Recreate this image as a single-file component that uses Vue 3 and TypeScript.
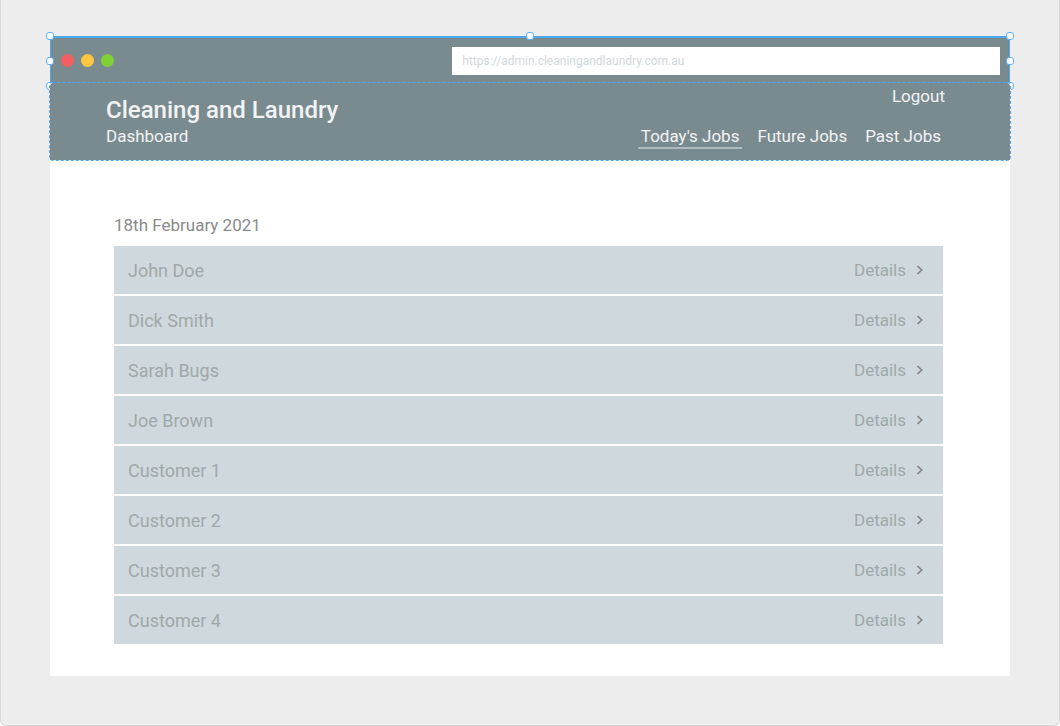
<script setup lang="ts">
import { ref } from 'vue'

interface Job {
  id: number
  customer: string
}

const address = ref('https://admin.cleaningandlaundry.com.au')
const lights: string[] = ['red', 'amber', 'green']
const handles: string[] = ['nw', 'n', 'ne', 'w', 'e', 'sw', 'se']
const tabs: string[] = ["Today's Jobs", 'Future Jobs', 'Past Jobs']
const activeTab = ref(tabs[0])

const jobs: Job[] = [
  'John Doe',
  'Dick Smith',
  'Sarah Bugs',
  'Joe Brown',
  'Customer 1',
  'Customer 2',
  'Customer 3',
  'Customer 4',
].map((customer, index) => ({ id: index + 1, customer }))
</script>

<template>
  <div class="canvas">
    <div class="window">
      <div class="browser-bar">
        <div class="lights">
          <span v-for="light in lights" :key="light" class="light" :class="light"></span>
        </div>
        <input v-model="address" class="address" type="text" aria-label="Address" spellcheck="false" />
        <span v-for="handle in handles" :key="handle" class="handle" :class="handle"></span>
      </div>

      <header class="app-header">
        <svg class="dashes" aria-hidden="true">
          <rect x="0.5" y="0.5" rx="3" />
        </svg>
        <div class="brand">
          <h1>Cleaning and Laundry</h1>
          <p>Dashboard</p>
        </div>
        <div class="menu">
          <a class="logout" href="#logout">Logout</a>
          <nav>
            <a
              v-for="tab in tabs"
              :key="tab"
              href="#jobs"
              :class="{ active: tab === activeTab }"
              @click.prevent="activeTab = tab"
            >{{ tab }}</a>
          </nav>
        </div>
      </header>

      <main>
        <h2>18th February 2021</h2>
        <ul class="jobs">
          <li v-for="job in jobs" :key="job.id">
            <span class="customer">{{ job.customer }}</span>
            <a class="details" href="#details" :aria-label="`Details for ${job.customer}`">
              Details
              <svg width="8" height="10" viewBox="0 0 8 10" aria-hidden="true">
                <path d="M1.5 1 L5.7 5 L1.5 9" />
              </svg>
            </a>
          </li>
        </ul>
      </main>
    </div>
  </div>
</template>

<style>
body {
  margin: 0;
  background: #fff;
}
</style>

<style scoped>
.canvas {
  box-sizing: border-box;
  min-height: 100vh;
  padding: 36px 49px 49px;
  border: 1px solid #d8d8d8;
  border-top: 0;
  border-radius: 0 0 6px 6px;
  background: #ededed;
  font-family: Roboto, 'Liberation Sans', sans-serif;
}

.window {
  background: #fff;
}

.browser-bar {
  position: relative;
  box-sizing: border-box;
  display: grid;
  grid-template-columns: 5fr 7fr;
  align-items: center;
  height: 50px;
  padding: 0 9px 2px 10px;
  border: 1px solid #4ba6f8;
  border-top-width: 2px;
  background: #7a8b90;
}

.lights {
  display: flex;
  gap: 7px;
}

.light {
  width: 13px;
  height: 13px;
  border-radius: 50%;
}

.red {
  background: #f35f60;
}

.amber {
  background: #fdc83f;
}

.green {
  background: #80d135;
}

.address {
  box-sizing: border-box;
  width: 100%;
  height: 28px;
  padding: 0 10px;
  border: 0;
  border-radius: 0;
  outline: 0;
  background: #fff;
  color: #cfd8dc;
  font: 12px Roboto, 'Liberation Sans', sans-serif;
}

.handle {
  position: absolute;
  box-sizing: border-box;
  width: 8px;
  height: 8px;
  margin: -4px;
  border: 1px solid #5cb0f8;
  border-radius: 3px;
  background: #fff;
}

.nw,
.n,
.ne {
  top: -2px;
}

.w,
.e {
  top: 23px;
}

.sw,
.se {
  top: 48px;
}

.nw,
.w,
.sw {
  left: -1px;
}

.n {
  left: 50%;
}

.ne,
.e,
.se {
  right: -1px;
}

.app-header {
  position: relative;
  box-sizing: border-box;
  display: flex;
  justify-content: space-between;
  height: 77px;
  margin-top: -3px;
  padding: 0 65px 0 56px;
  border-radius: 4px 4px 0 0;
  background: #7a8b90;
  box-shadow: -1px 1px 0 #fff, 1px 1px 0 #fff;
  color: #f1f3f4;
  font-size: 17px;
  line-height: 20px;
}

.dashes {
  position: absolute;
  inset: -1px;
  width: calc(100% + 2px);
  height: calc(100% + 2px);
  pointer-events: none;
}

.dashes rect {
  width: calc(100% - 1px);
  height: calc(100% - 1px);
  fill: none;
  stroke: #4ba6f8;
  stroke-dasharray: 3 2;
}

.brand {
  padding-top: 11px;
}

h1 {
  margin: 0;
  font-size: 24px;
  font-weight: 500;
  line-height: 32px;
}

.brand p {
  margin: 0;
}

.menu {
  display: flex;
  flex-direction: column;
  align-items: flex-end;
  gap: 20px;
  padding-top: 3px;
}

.menu a {
  color: inherit;
  text-decoration: none;
}

nav {
  display: flex;
  gap: 12px;
  padding-right: 1px;
}

nav a {
  padding: 0 3px 1px;
  border-bottom: 2px solid transparent;
}

nav .active {
  border-color: #b0babd;
}

main {
  padding: 54px 67px 32px 64px;
}

h2 {
  margin: 0 0 10px;
  color: #8a8a8a;
  font-size: 17px;
  font-weight: 400;
  line-height: 22px;
}

.jobs {
  display: grid;
  gap: 2px;
  margin: 0;
  padding: 0;
  list-style: none;
}

.jobs li {
  display: flex;
  align-items: center;
  justify-content: space-between;
  height: 48px;
  padding: 0 19px 0 14px;
  background: #cfd8dd;
  color: #a0a8a9;
}

.customer {
  font-size: 18px;
}

.details {
  display: flex;
  align-items: center;
  gap: 10px;
  color: inherit;
  font-size: 17px;
  text-decoration: none;
}

.details svg {
  fill: none;
  stroke: #858585;
  stroke-width: 1.7;
}
</style>
